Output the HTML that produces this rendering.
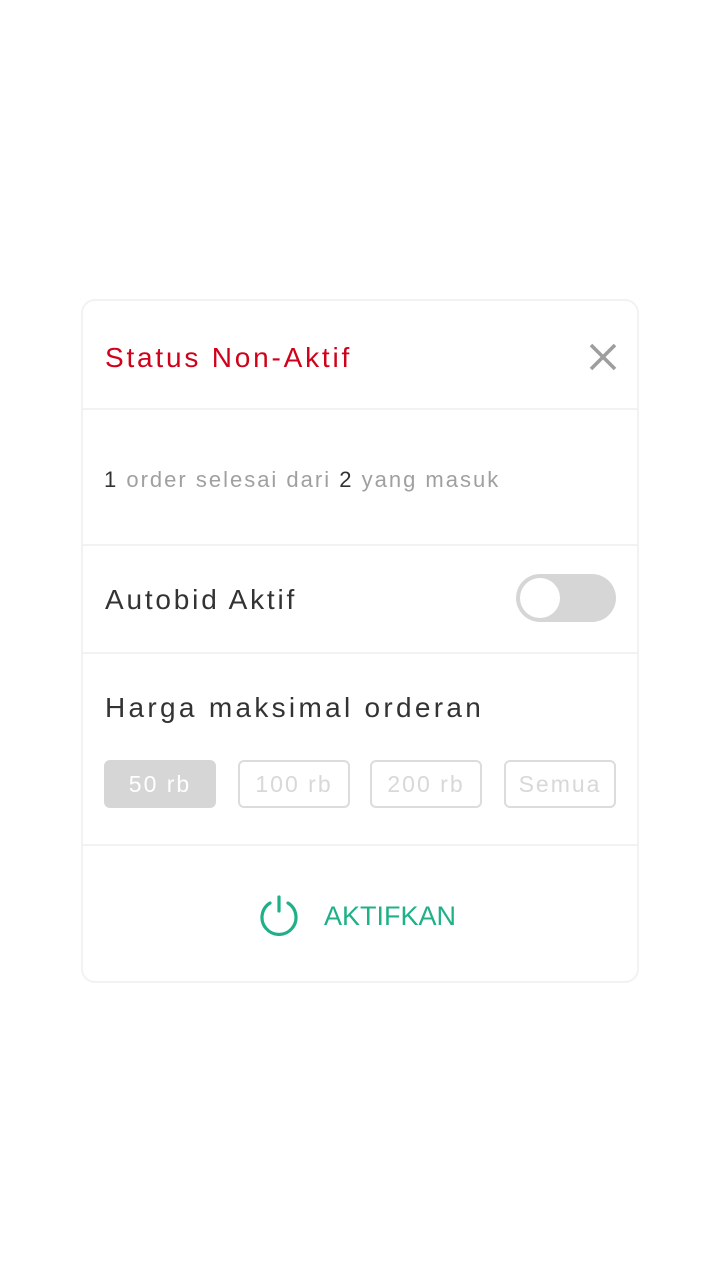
<!DOCTYPE html>
<html><head><meta charset="utf-8"><style>
*{margin:0;padding:0;box-sizing:border-box}
body{width:720px;height:1280px;background:#fff;font-family:"Liberation Sans",sans-serif;position:relative;overflow:hidden}
.card{position:absolute;left:81px;top:299px;width:558px;height:684px;border:2px solid #f2f2f2;border-radius:14px}
.hr{position:absolute;left:82px;width:556px;height:2px;background:#f2f2f2}
.t{position:absolute;white-space:nowrap}
.chip{position:absolute;top:760px;width:112px;height:48px;border:2px solid #dcdcdc;border-radius:6px;color:#d8d8d8;font-size:23px;line-height:44px;text-align:center;letter-spacing:2px}
</style></head><body>
<div class="card"></div>
<div class="t" style="left:105px;top:340px;font-size:28px;color:#d0021b;line-height:36px;letter-spacing:2.8px">Status Non-Aktif</div>
<svg style="position:absolute;left:589px;top:343px" width="28" height="28" viewBox="0 0 28 28"><path d="M2 2L26 26M26 2L2 26" stroke="#9e9e9e" stroke-width="3.6"/></svg>
<div class="hr" style="top:408px"></div>
<div class="t" style="left:104px;top:465px;font-size:22px;line-height:30px;color:#a0a0a0;letter-spacing:2px"><span style="color:#333">1</span> order selesai dari <span style="color:#333">2</span> yang masuk</div>
<div class="hr" style="top:544px"></div>
<div class="t" style="left:105px;top:582px;font-size:28px;line-height:36px;color:#333;letter-spacing:2.8px">Autobid Aktif</div>
<div style="position:absolute;left:516px;top:574px;width:100px;height:48px;border-radius:24px;background:#d6d6d6"></div>
<div style="position:absolute;left:520px;top:578px;width:40px;height:40px;border-radius:50%;background:#fff"></div>
<div class="hr" style="top:652px"></div>
<div class="t" style="left:105px;top:690px;font-size:28px;line-height:36px;color:#333;letter-spacing:3.3px">Harga maksimal orderan</div>
<div class="chip" style="left:104px;background:#d6d6d6;border-color:#d6d6d6;color:#fff">50 rb</div>
<div class="chip" style="left:238px">100 rb</div>
<div class="chip" style="left:370px">200 rb</div>
<div class="chip" style="left:504px">Semua</div>
<div class="hr" style="top:844px"></div>
<svg style="position:absolute;left:259px;top:894px" width="40" height="42" viewBox="0 0 40 42"><path d="M11 9A17 17 0 1 0 29 9" fill="none" stroke="#1fb088" stroke-width="3.2" stroke-linecap="round"/><path d="M20 3V17" stroke="#1fb088" stroke-width="3.2" stroke-linecap="round"/></svg>
<div class="t" style="left:324px;top:898px;font-size:27px;line-height:36px;color:#1fb088">AKTIFKAN</div>
</body></html>
